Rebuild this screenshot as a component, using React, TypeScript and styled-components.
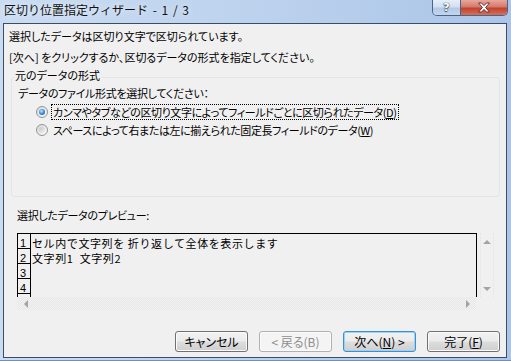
import React from "react";
import styled, { createGlobalStyle } from "styled-components";

const GlobalStyle = createGlobalStyle`
  html, body {
    margin: 0;
    padding: 0;
    background: #ffffff;
  }
  body {
    overflow: hidden;
    font-family: "Noto Sans CJK JP", "Noto Sans", sans-serif;
    font-size: 11px;
    color: #000;
  }
`;

const Window = styled.div`
  width: 511px;
  height: 361px;
  box-sizing: border-box;
  display: flex;
  flex-direction: column;
  background: linear-gradient(90deg, #cadcf2 0%, #bed3ee 45%, #abc5e8 100%);
  border-bottom: 1px solid #6f8fbd;
`;

const TitleBar = styled.div`
  height: 23px;
  flex: none;
  display: flex;
  justify-content: space-between;
  align-items: flex-start;
`;

const Title = styled.div`
  padding-left: 4px;
  line-height: 20px;
  font-size: 12px;
  word-spacing: 2px;
  color: #111;
  text-shadow: 0 0 6px rgba(255, 255, 255, 0.9);
`;

const CaptionButtons = styled.div`
  display: flex;
  margin-right: 3px;
  height: 15px;
  border: 1px solid #4a6486;
  border-top: none;
  border-radius: 0 0 5px 5px;
  overflow: hidden;
`;

const CaptionButton = styled.div<{ $close?: boolean }>`
  width: ${(p) => (p.$close ? "46px" : "27px")};
  height: 100%;
  display: flex;
  align-items: center;
  justify-content: center;
  background: ${(p) =>
    p.$close
      ? "linear-gradient(180deg, #e8a89c 0%, #d47a6a 45%, #c4412f 55%, #d2725c 100%)"
      : "linear-gradient(180deg, #e6eef8 0%, #d2e0f1 45%, #b3c9e5 55%, #c3d6ee 100%)"};
  border-left: ${(p) => (p.$close ? "1px solid #4a6486" : "none")};
`;

const HelpGlyph = styled.span`
  font-family: "DejaVu Sans", sans-serif;
  font-weight: bold;
  font-size: 11px;
  line-height: 13px;
  color: #fff;
  text-shadow: 0 0 1px #33485f, 0 0 1px #33485f, 0 1px 1px #33485f;
`;

const Client = styled.div`
  flex: 1;
  margin: 0 4px 2px 3px;
  border: 1px solid #3b4c66;
  background: #f0f0f0;
  display: flex;
  flex-direction: column;
  padding-bottom: 5px;
`;

const Intro = styled.div`
  padding: 2px 0 0 5px;
  line-height: 21px;
  font-feature-settings: "palt" 1;
`;

const Group = styled.fieldset`
  margin: 0 6px 0 7px;
  padding: 0 0 0 6px;
  height: 129px;
  box-sizing: border-box;
  border: 1px solid #e0e6ea;
  border-radius: 3px;
  min-width: 0;
`;

const GroupLegend = styled.legend`
  margin-left: -4px;
  padding: 0 1px 4px;
  line-height: 14px;
  font-feature-settings: "palt" 1;
`;

const Prompt = styled.div`
  line-height: 14px;
  letter-spacing: -0.3px;
  font-feature-settings: "palt" 1;
`;

const RadioList = styled.div`
  margin-top: 3px;
  padding-left: 18px;
  display: flex;
  flex-direction: column;
`;

const RadioRow = styled.div`
  height: 18px;
  display: flex;
  align-items: center;
  gap: 2px;
`;

const RadioMark = styled.span<{ $checked?: boolean }>`
  position: relative;
  flex: none;
  width: 12px;
  height: 12px;
  box-sizing: border-box;
  border-radius: 50%;
  border: 1px solid #8f9599;
  background: linear-gradient(135deg, #d8d8d8, #fbfbfb);

  &::after {
    content: "";
    position: absolute;
    inset: 2px;
    border-radius: 50%;
    background: ${(p) =>
      p.$checked
        ? "radial-gradient(circle at 40% 35%, #b8e4fc 0%, #3d8fe0 50%, #134a9c 100%)"
        : "linear-gradient(135deg, #c3c3c3, #f2f2f2)"};
  }
`;

const RadioLabel = styled.span<{ $focused?: boolean }>`
  margin-left: 1px;
  padding: 0 1px;
  line-height: 14px;
  letter-spacing: -0.4px;
  border: 1px dotted ${(p) => (p.$focused ? "#000" : "transparent")};
  font-feature-settings: "palt" 1;
  white-space: nowrap;
`;

const PreviewLabel = styled.div`
  margin: 11px 0 0 13px;
  line-height: 14px;
  letter-spacing: -0.3px;
  font-feature-settings: "palt" 1;
`;

const Preview = styled.div`
  margin: 11px 0 0 13px;
  width: 477px;
  display: flex;
  flex-direction: column;
`;

const PreviewTop = styled.div`
  display: flex;
  gap: 3px;
`;

const Grid = styled.div`
  width: 460px;
  height: 64px;
  box-sizing: border-box;
  border: 1px solid #000;
  border-bottom: none;
  overflow: hidden;
  display: flex;
`;

const NumColumn = styled.div`
  width: 13px;
  flex: none;
  display: flex;
  flex-direction: column;
  border-right: 1px solid #000;
  box-sizing: border-box;
`;

const NumCell = styled.div`
  height: 15px;
  flex: none;
  box-sizing: border-box;
  border-bottom: 1px solid #000;
  padding: 3px 0 0 2px;
  font-family: "Liberation Sans", Arial, sans-serif;
  font-size: 11px;
  line-height: 12px;
`;

const TextColumn = styled.div`
  padding: 2px 0 0 1px;
  display: flex;
  flex-direction: column;
`;

const TextLine = styled.div`
  font-size: 11px;
  line-height: 15px;
  white-space: pre;
  letter-spacing: 0.6px;
`;

const VScroll = styled.div`
  width: 14px;
  height: 64px;
  box-sizing: border-box;
  background: #f0f0f0;
  border-left: 1px dotted #e2e2e2;
  border-right: 1px dotted #e2e2e2;
  display: flex;
  flex-direction: column;
  justify-content: space-between;
  align-items: center;
  padding: 7px 0 6px;
`;

const HScroll = styled.div`
  width: 459px;
  height: 13px;
  box-sizing: border-box;
  background: repeating-conic-gradient(#e6e6e6 0 25%, #f3f3f3 0 50%) 0 0 / 2px 2px;
  display: flex;
  justify-content: space-between;
  align-items: center;
  padding: 0 6px 0 7px;
`;

const Arrow = styled.span<{ $dir: "up" | "down" | "left" | "right" }>`
  width: 0;
  height: 0;
  border-style: solid;
  border-color: transparent;
  ${(p) =>
    p.$dir === "up"
      ? "border-width: 0 4px 4px 4px; border-bottom-color: #a3a3a3;"
      : p.$dir === "down"
      ? "border-width: 4px 4px 0 4px; border-top-color: #a3a3a3;"
      : p.$dir === "left"
      ? "border-width: 4px 4px 4px 0; border-right-color: #a3a3a3;"
      : "border-width: 4px 0 4px 4px; border-left-color: #a3a3a3;"}
`;

const ButtonRow = styled.div`
  margin-top: auto;
  padding-right: 6px;
  display: flex;
  justify-content: flex-end;
  gap: 11px;
`;

const Button = styled.div<{ $default?: boolean; $disabled?: boolean }>`
  width: 73px;
  height: 21px;
  box-sizing: border-box;
  border-radius: 3px;
  display: flex;
  align-items: center;
  justify-content: center;
  font-size: 12px;
  font-feature-settings: "palt" 1;
  border: 1px solid
    ${(p) => (p.$disabled ? "#adb2b5" : p.$default ? "#3c8fd1" : "#707070")};
  color: ${(p) => (p.$disabled ? "#8d8d8d" : "#000")};
  background: ${(p) =>
    p.$disabled
      ? "#f4f4f4"
      : "linear-gradient(180deg, #f2f2f2 0%, #ebebeb 48%, #dddddd 52%, #cfcfcf 100%)"};
  box-shadow: ${(p) =>
    p.$default ? "inset 0 0 0 1px #9ad3f5" : "inset 0 0 0 1px #fbfbfb"};

  u {
    text-decoration-thickness: 1px;
    text-underline-offset: 1px;
  }
`;

const CloseIcon = () => (
  <svg width="14" height="11" viewBox="0 0 14 11">
    <path
      d="M1.5 1 L4.5 1 L7 3.6 L9.5 1 L12.5 1 L8.6 5.5 L12.5 10 L9.5 10 L7 7.4 L4.5 10 L1.5 10 L5.4 5.5 Z"
      fill="#ffffff"
      stroke="#5a2320"
      strokeWidth="0.9"
      strokeLinejoin="round"
    />
  </svg>
);

const previewLines = ["セル内で文字列を 折り返して全体を表示します", "文字列1  文字列2"];

const App: React.FC = () => {
  return (
    <>
      <GlobalStyle />
      <Window>
        <TitleBar>
          <Title>区切り位置指定ウィザード - 1 / 3</Title>
          <CaptionButtons>
            <CaptionButton>
              <HelpGlyph>?</HelpGlyph>
            </CaptionButton>
            <CaptionButton $close>
              <CloseIcon />
            </CaptionButton>
          </CaptionButtons>
        </TitleBar>

        <Client>
          <Intro>
            <div>選択したデータは区切り文字で区切られています。</div>
            <div>[次へ] をクリックするか、区切るデータの形式を指定してください。</div>
          </Intro>

          <Group>
            <GroupLegend>元のデータの形式</GroupLegend>
            <Prompt>データのファイル形式を選択してください：</Prompt>
            <RadioList>
              <RadioRow>
                <RadioMark $checked />
                <RadioLabel $focused>
                  カンマやタブなどの区切り文字によってフィールドごとに区切られたデータ(<u>D</u>)
                </RadioLabel>
              </RadioRow>
              <RadioRow>
                <RadioMark />
                <RadioLabel>
                  スペースによって右または左に揃えられた固定長フィールドのデータ(<u>W</u>)
                </RadioLabel>
              </RadioRow>
            </RadioList>
          </Group>

          <PreviewLabel>選択したデータのプレビュー:</PreviewLabel>

          <Preview>
            <PreviewTop>
              <Grid>
                <NumColumn>
                  {[1, 2, 3, 4].map((n) => (
                    <NumCell key={n}>{n}</NumCell>
                  ))}
                </NumColumn>
                <TextColumn>
                  {previewLines.map((line, i) => (
                    <TextLine key={i}>{line}</TextLine>
                  ))}
                </TextColumn>
              </Grid>
              <VScroll>
                <Arrow $dir="up" />
                <Arrow $dir="down" />
              </VScroll>
            </PreviewTop>
            <HScroll>
              <Arrow $dir="left" />
              <Arrow $dir="right" />
            </HScroll>
          </Preview>

          <ButtonRow>
            <Button>キャンセル</Button>
            <Button $disabled>&lt; 戻る(B)</Button>
            <Button $default>
              次へ(<u>N</u>) &gt;
            </Button>
            <Button>
              完了(<u>F</u>)
            </Button>
          </ButtonRow>
        </Client>
      </Window>
    </>
  );
};

export default App;
